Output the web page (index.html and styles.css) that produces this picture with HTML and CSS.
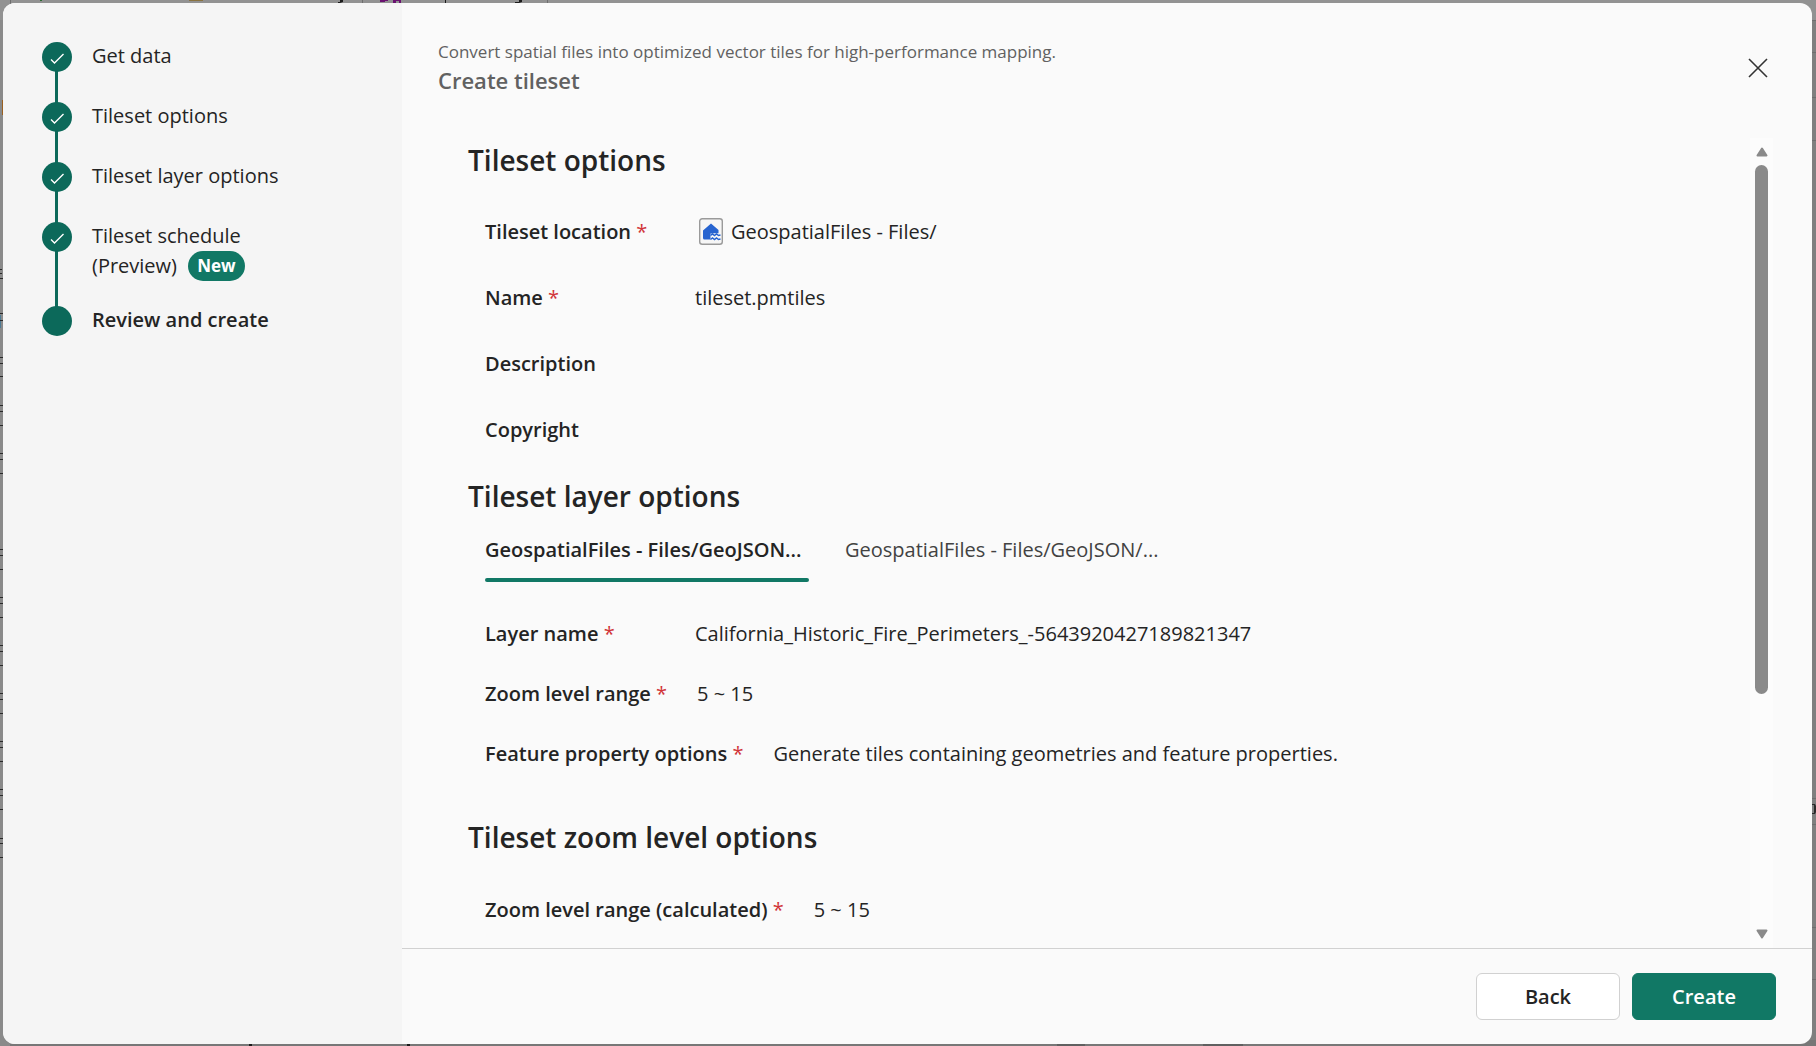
FILE: index.html
```html
<!DOCTYPE html>
<html lang="en">
<head>
<meta charset="utf-8">
<title>Create tileset</title>
<link rel="stylesheet" href="styles.css">
</head>
<body>

<!-- dimmed page behind the dialog -->
<svg class="backdrop" aria-hidden="true">
  <path fill="#929292" d="M0 0h1816v20H0z"/>
  <path fill="#8a8a8a" d="M0 20h10v1026H0z"/>
  <path fill="#777" d="M10 1040h1806v6H10z"/>
  <path fill="#6e6e6e" d="M10 0h1v20h-1zM362 0h1v3h-1zM547 0h1v3h-1zM1812 20h4v1h-4zM1812 52h4v1h-4zM1812 97h4v1h-4zM1812 140h4v1h-4zM1812 798h4v1h-4zM1812 824h4v1h-4zM1812 927h4v1h-4zM1812 979h4v1h-4z"/>
  <path fill="#606060" d="M1057 1044h28v2h-28zM1203 1044h40v2h-40z"/>
  <path fill="#1c1c1c" d="M340 0h3v2l-3 1h-2v-1h2zM445 0h1v3h-1zM519 0h3v2l-3 1h-4v-1h4zM249 1044h3v2h-3zM407 1044h3v2h-3z"/>
  <path fill="#6a1270" d="M380 0h8v1h-3v1h-5zM393 0h8v3h-2v-2h-3v2h-3z"/>
  <path fill="#8a7340" d="M189 0h14v1h-14z"/>
  <path fill="#2d6a33" d="M40 0h2v1h-2z"/>
  <path fill="#9a6020" d="M2 100h1v15h-1z"/>
  <path fill="#4c7a94" d="M0 315h1v13h-1z"/>
  <g fill="#2a2a2a">
    <path d="M0 269h2v1h-2zM0 273h2v1h-2zM0 278h3v1h-3z"/>
    <path d="M0 313h3v1h-3zM0 320h3v1h-3z"/>
    <path d="M0 357h3v1h-3zM0 363h3v1h-3zM0 376h3v1h-3z"/>
    <path d="M0 405h3v1h-3zM0 411h3v1h-3zM0 425h3v1h-3z"/>
    <path d="M0 453h3v1h-3zM0 459h3v1h-3zM0 473h3v1h-3z"/>
    <path d="M0 549h3v1h-3zM0 555h3v1h-3zM0 569h3v1h-3z"/>
    <path d="M0 597h3v1h-3zM0 603h3v1h-3zM0 617h3v1h-3z"/>
    <path d="M0 645h3v1h-3zM0 651h3v1h-3zM0 665h3v1h-3z"/>
    <path d="M0 693h3v1h-3zM0 699h3v1h-3zM0 713h3v1h-3z"/>
    <path d="M0 741h3v1h-3zM0 747h3v1h-3zM0 761h3v1h-3z"/>
    <path d="M0 789h3v1h-3zM0 795h3v1h-3zM0 809h3v1h-3z"/>
    <path d="M0 838h3v1h-3zM0 843h3v1h-3zM0 857h3v1h-3z"/>
    <path d="M1812 804h3l1 2v6l-1 2h-3v-1h2v-8h-2z"/>
  </g>
</svg>

<div class="dialog" role="dialog" aria-labelledby="title">
  <ol class="steps">
    <li class="step">
      <svg class="dot" viewBox="0 0 30 30"><circle cx="15" cy="15" r="15"/><path d="M9 17.5l3.500 3.500 9-9"/></svg>
      <span>Get data</span>
    </li>
    <li class="step">
      <svg class="dot" viewBox="0 0 30 30"><circle cx="15" cy="15" r="15"/><path d="M9 17.5l3.500 3.500 9-9"/></svg>
      <span>Tileset options</span>
    </li>
    <li class="step">
      <svg class="dot" viewBox="0 0 30 30"><circle cx="15" cy="15" r="15"/><path d="M9 17.5l3.500 3.500 9-9"/></svg>
      <span>Tileset layer options</span>
    </li>
    <li class="step">
      <svg class="dot" viewBox="0 0 30 30"><circle cx="15" cy="15" r="15"/><path d="M9 17.5l3.500 3.500 9-9"/></svg>
      <span>Tileset schedule<br>(Preview) <b class="badge">New</b></span>
    </li>
    <li class="step current" aria-current="step">
      <svg class="dot" viewBox="0 0 30 30"><circle cx="15" cy="15" r="15"/></svg>
      <span>Review and create</span>
    </li>
  </ol>

  <div class="main">
    <div class="header">
      <div>
        <p class="subtitle">Convert spatial files into optimized vector tiles for high-performance mapping.</p>
        <h1 id="title">Create tileset</h1>
      </div>
      <button class="close" aria-label="Close">
        <svg width="20" height="20" viewBox="0 0 20 20"><path d="M1 1l18 18M19 1l-18 18"/></svg>
      </button>
    </div>

    <div class="body">
      <div class="review">
        <h2>Tileset options</h2>
        <dl class="fields roomy">
          <div class="field">
            <dt>Tileset location <i>*</i></dt>
            <dd>
              <svg class="lakehouse" width="32" height="28" viewBox="0 0 32 28">
                <rect x="4.700" y="0.700" width="22.600" height="25.600" rx="2.500" fill="#f6f6f6" stroke="#9a9a9a" stroke-width="1.400"/>
                <path d="M16 5.500l7.500 6.500v3.500h-5l-2 6h-7q-1.500 0-1.500-1.500v-7.500z" fill="#2764d0"/>
                <path d="M15.500 15.500h10v7h-10z" fill="#f6f6f6"/>
                <path d="M15.500 17.500l2-1.500 2 1.500 2-1.500 2 1.500 2-.5M15.500 21.500l2-1.500 2 1.500 2-1.500 2 1.500 2-.5" fill="none" stroke="#2764d0" stroke-width="1.500"/>
              </svg>
              GeospatialFiles - Files/
            </dd>
          </div>
          <div class="field"><dt>Name <i>*</i></dt><dd>tileset.pmtiles</dd></div>
          <div class="field"><dt>Description</dt><dd></dd></div>
          <div class="field"><dt>Copyright</dt><dd></dd></div>
        </dl>

        <h2 class="layer-title">Tileset layer options</h2>
        <div class="tabs" role="tablist">
          <button class="tab selected" role="tab" aria-selected="true">GeospatialFiles - Files/GeoJSON...</button>
          <button class="tab" role="tab" aria-selected="false">GeospatialFiles - Files/GeoJSON/...</button>
        </div>
        <dl class="fields">
          <div class="field"><dt>Layer name <i>*</i></dt><dd>California_Historic_Fire_Perimeters_-5643920427189821347</dd></div>
          <div class="field"><dt>Zoom level range <i>*</i></dt><dd>5 ~ 15</dd></div>
          <div class="field"><dt>Feature property options <i>*</i></dt><dd>Generate tiles containing geometries and feature properties.</dd></div>
        </dl>

        <h2 class="zoom-title">Tileset zoom level options</h2>
        <dl class="fields">
          <div class="field"><dt>Zoom level range (calculated) <i>*</i></dt><dd>5 ~ 15</dd></div>
        </dl>
      </div>

      <div class="scrollbar" aria-hidden="true">
        <svg width="12" height="10" viewBox="0 0 12 10"><path d="M6 1.500L10.500 8.500h-9z"/></svg>
        <div class="track"><div class="thumb"></div></div>
        <svg width="12" height="10" viewBox="0 0 12 10"><path d="M6 8.500L10.500 1.500h-9z"/></svg>
      </div>
    </div>

    <div class="footer">
      <button class="btn">Back</button>
      <button class="btn primary">Create</button>
    </div>
  </div>
</div>

</body>
</html>
```
FILE: styles.css
```css
* {
  box-sizing: border-box;
}

body {
  margin: 0;
  height: 100vh;
  padding: 3px 4px 2px 3px;
  background: #7f7f7f;
  color: #242424;
  font: 20px/30px "Open Sans", "Noto Sans", sans-serif;
  overflow: hidden;
}

h1, h2, p, dl, dd, ol {
  margin: 0;
  padding: 0;
}

button {
  font: inherit;
  color: inherit;
  border: 0;
  background: none;
  padding: 0;
}

.backdrop {
  position: absolute;
  left: 0;
  top: 0;
  width: 100%;
  height: 100%;
}

.dialog {
  position: relative;
  display: flex;
  height: 100%;
  border-radius: 12px;
  background: #fafafa;
  overflow: hidden;
}

/* wizard steps */
.steps {
  flex: 0 0 399px;
  padding: 39px;
  background: #f5f5f5;
  list-style: none;
}

.step {
  position: relative;
  display: flex;
  gap: 20px;
  padding-bottom: 30px;
}

.step:nth-child(4) {
  padding-bottom: 25px;
}

.step span {
  margin-top: -1px;
}

.step:not(:last-child)::before {
  content: "";
  position: absolute;
  left: 13px;
  top: 15px;
  width: 3px;
  height: 100%;
  background: #0c695a;
}

.dot {
  position: relative;
  width: 30px;
  height: 30px;
  fill: #0c695a;
}

.dot path {
  fill: none;
  stroke: #fff;
  stroke-width: 1.4;
}

.current, dt, h1, h2, .btn, .selected {
  font-weight: 600;
}

.badge {
  display: inline-block;
  margin-left: 6px;
  padding: 0 9px;
  border-radius: 15px;
  background: #117865;
  color: #fff;
  font-size: 17px;
  line-height: 30px;
  vertical-align: top;
}

/* right side */
.main {
  flex: 1;
  min-width: 0;
  display: flex;
  flex-direction: column;
}

.header {
  display: flex;
  justify-content: space-between;
  align-items: flex-start;
  height: 135px;
  padding: 35px 44px 0 36px;
  color: #616161;
}

.subtitle {
  font-size: 17px;
  line-height: 27px;
}

h1 {
  font-size: 22px;
  line-height: 30px;
}

.close {
  margin-top: 20px;
}

.close svg {
  display: block;
  stroke: #333;
  stroke-width: 1.6;
}

.body {
  flex: 1;
  min-height: 0;
  display: flex;
  padding-right: 39px;
}

.review {
  flex: 1;
  padding: 1px 0 0 66px;
  overflow: hidden;
}

h2 {
  font-size: 28px;
  line-height: 42px;
}

.fields {
  padding: 22px 0 0 17px;
}

.field {
  display: flex;
  gap: 30px;
  padding: 15px 0;
}

.roomy {
  padding-top: 18px;
}

.roomy .field {
  padding: 18px 0;
}

dt {
  min-width: 180px;
}

dt i {
  color: #d13438;
  font-style: normal;
  font-weight: 400;
}

dd {
  display: flex;
  align-items: center;
  gap: 4px;
}

.layer-title {
  margin-top: 12px;
}

.zoom-title {
  margin-top: 32px;
}

.tabs {
  display: flex;
  gap: 36px;
  padding: 5px 0 0 17px;
}

.tab {
  position: relative;
  min-width: 324px;
  height: 60px;
  padding-bottom: 4px;
  color: #424242;
  text-align: left;
}

.tab.selected {
  color: #242424;
}

.tab.selected::after {
  content: "";
  position: absolute;
  left: 0;
  right: 0;
  bottom: 0;
  height: 4px;
  border-radius: 2px;
  background: #117865;
}

.scrollbar {
  flex: 0 0 23px;
  display: flex;
  flex-direction: column;
  align-items: center;
  gap: 8px;
  padding: 9px 0;
  background: #fcfcfc;
}

.scrollbar path {
  fill: #8a8a8a;
  stroke: #8a8a8a;
  stroke-width: 2;
  stroke-linejoin: round;
}

.track {
  flex: 1;
  width: 13px;
}

.thumb {
  height: 70%;
  border-radius: 7px;
  background: #8a8a8a;
}

.footer {
  display: flex;
  justify-content: flex-end;
  gap: 12px;
  padding: 24px 36px;
  border-top: 1px solid #d1d1d1;
}

.btn {
  width: 144px;
  height: 47px;
  border: 1px solid #d1d1d1;
  border-radius: 6px;
  background: #fff;
}

.btn.primary {
  border-color: #117865;
  background: #117865;
  color: #fff;
}
```
